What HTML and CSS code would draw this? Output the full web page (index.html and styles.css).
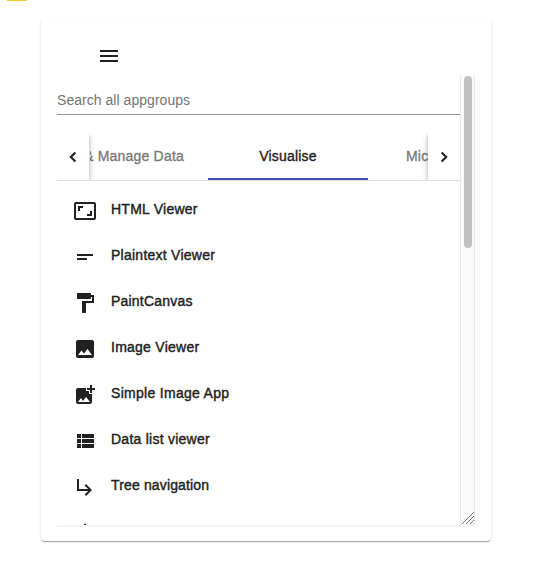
FILE: index.html
```html
<!DOCTYPE html>
<html lang="en">
<head>
<meta charset="utf-8">
<title>App groups</title>
<link rel="stylesheet" href="styles.css">
</head>
<body>
<div class="marker"></div>
<main class="card">
  <header class="toolbar">
    <svg class="icon" viewBox="0 0 24 24"><path d="M3 18h18v-2H3v2zm0-5h18v-2H3v2zm0-7v2h18V6H3z"/></svg>
  </header>
  <section class="panel">
    <div class="content">
      <div class="search"><span class="search-text">Search all appgroups</span></div>
      <nav class="tabs">
        <button class="pager pager-left"><svg viewBox="0 0 10 12"><path d="M7.4 1.4 2.8 6l4.6 4.6"/></svg></button>
        <div class="tab-strip">
          <span class="tab tab-prev"><span class="t-prev">&amp; Manage Data</span></span>
          <span class="tab tab-active"><span class="t-active">Visualise</span></span>
          <span class="tab tab-next"><span class="t-next">Mic</span></span>
        </div>
        <button class="pager pager-right"><svg viewBox="0 0 10 12"><path d="M2.6 1.4 7.2 6l-4.6 4.6"/></svg></button>
      </nav>
      <ul class="apps">
        <li><svg class="icon" viewBox="0 0 24 24"><path d="M19 12h-2v3h-3v2h5v-5zM7 9h3V7H5v5h2V9zm14-6H3c-1.1 0-2 .9-2 2v14c0 1.1.9 2 2 2h18c1.1 0 2-.9 2-2V5c0-1.1-.9-2-2-2zm0 16.01H3V4.99h18v14.02z"/></svg><span>HTML Viewer</span></li>
        <li><svg class="icon" viewBox="0 0 24 24"><path d="M4 9h16v2H4V9zm0 4h10v2H4v-2z"/></svg><span>Plaintext Viewer</span></li>
        <li><svg class="icon" viewBox="0 0 24 24"><path d="M18 4V3c0-.55-.45-1-1-1H5c-.55 0-1 .45-1 1v4c0 .55.45 1 1 1h12c.55 0 1-.45 1-1V6h1v4H9v11c0 .55.45 1 1 1h2c.55 0 1-.45 1-1v-9h8V4h-3z"/></svg><span>PaintCanvas</span></li>
        <li><svg class="icon" viewBox="0 0 24 24"><path d="M21 19V5c0-1.1-.9-2-2-2H5c-1.1 0-2 .9-2 2v14c0 1.1.9 2 2 2h14c1.1 0 2-.9 2-2zM8.5 13.5l2.5 3.01L14.5 12l4.5 6H5l3.5-4.5z"/></svg><span>Image Viewer</span></li>
        <li><svg class="icon" viewBox="0 0 24 24"><path d="M19 7v2.99s-1.99.01-2 0V7h-3s.01-1.99 0-2h3V2h2v3h3v2h-3zm-3 4V8h-3V5H5c-1.1 0-2 .9-2 2v12c0 1.1.9 2 2 2h12c1.1 0 2-.9 2-2v-8h-3zM5 19l3-4 2 3 3-4 4 5H5z"/></svg><span>Simple Image App</span></li>
        <li><svg class="icon" viewBox="0 0 24 24"><path d="M4 14h4v-4H4v4zm0 5h4v-4H4v4zM4 9h4V5H4v4zm5 5h12v-4H9v4zm0 5h12v-4H9v4zM9 5v4h12V5H9z"/></svg><span>Data list viewer</span></li>
        <li><svg class="icon" viewBox="0 0 24 24"><path d="M19 15l-6 6-1.42-1.42L15.17 16H4V4h2v10h9.17l-3.59-3.58L13 9l6 6z"/></svg><span>Tree navigation</span></li>
        <li><svg class="icon" viewBox="0 0 24 24"><path d="M12 2l-5.5 9h11z"/></svg></li>
      </ul>
    </div>
    <div class="scrollbar">
      <div class="thumb"></div>
      <svg class="grip" viewBox="0 0 14 14"><path d="M1 13 13 1M5 13l8-8M9 13l4-4"/></svg>
    </div>
  </section>
</main>
</body>
</html>
```
FILE: styles.css
```css
* { box-sizing: border-box; }
body {
  margin: 0;
  height: 580px;
  overflow: hidden;
  background: #fff;
  color: #212121;
  font: 14px/20px "Liberation Sans", Arial, sans-serif;
}
.marker {
  width: 20px;
  height: 1px;
  margin-left: 7px;
  background: #fbc92e;
}
.card {
  width: 450px;
  height: 522px;
  margin: 18px 0 0 41px;
  padding: 25px 16px 14px;
  background: #fff;
  border-radius: 4px;
  box-shadow: 0 2px 1px -1px rgba(0,0,0,.2), 0 1px 1px rgba(0,0,0,.14), 0 1px 3px rgba(0,0,0,.12);
}
.toolbar { height: 31px; padding-left: 40px; }
.icon { display: block; width: 24px; height: 24px; flex: none; fill: #212121; }
.panel { display: flex; height: 452px; border-bottom: 2px solid #f4f4f4; }
.content { width: 403px; overflow: hidden; }
.search {
  height: 40px;
  padding-top: 15px;
  border-bottom: 1px solid #8e8e8e;
  color: #757575;
  letter-spacing: .04px;
}
.search-text { display: block; }
.tabs { display: flex; height: 48px; margin-top: 18px; border-bottom: 1px solid #e0e0e0; }
.pager {
  position: relative;
  z-index: 1;
  flex: none;
  display: flex;
  align-items: center;
  justify-content: center;
  padding: 0;
  border: 0;
  background: #fff;
  clip-path: inset(0 -8px 0 -8px);
  box-shadow: 0 2px 4px -1px rgba(0,0,0,.2), 0 4px 5px rgba(0,0,0,.14), 0 1px 10px rgba(0,0,0,.12);
}
.pager-left { width: 32px; margin-right: 1px; }
.pager-right { width: 32px; }
.pager svg { width: 10px; height: 12px; fill: none; stroke: #212121; stroke-width: 2.1; }
.tab-strip { display: flex; flex: 1; min-width: 0; overflow: hidden; }
.tab {
  flex: none;
  height: 47px;
  line-height: 46px;
  white-space: nowrap;
  color: #7a7a7a;
  letter-spacing: .2px;
  -webkit-text-stroke: .35px currentColor;
}
.tab-prev { width: 118px; display: flex; justify-content: flex-end; padding-right: 24px; }
.tab-active { width: 160px; text-align: center; color: #212121; border-bottom: 2px solid #3f51b5; }
.tab-next { padding-left: 38px; }
.apps { list-style: none; margin: 18px 0 0; padding: 0 0 0 16px; }
.apps li { display: flex; gap: 14px; height: 46px; letter-spacing: .25px; -webkit-text-stroke: .4px #212121; }
.apps li:nth-child(3) { letter-spacing: .2px; }
.apps li:nth-child(5) { letter-spacing: .3px; }
.apps li:nth-child(7) { letter-spacing: .15px; }
.apps .icon { -webkit-text-stroke: 0; }
.apps span { line-height: 20px; }
.scrollbar {
  display: flex;
  flex-direction: column;
  justify-content: space-between;
  align-items: center;
  width: 15px;
  padding-top: 1px;
  background: #fafafa;
  border: solid #e8e8e8;
  border-width: 0 1px;
}
.thumb { width: 8px; height: 172px; border-radius: 4px; background: #c1c1c1; }
.grip { width: 14px; height: 14px; fill: none; stroke: #777; stroke-width: 1; }
```
